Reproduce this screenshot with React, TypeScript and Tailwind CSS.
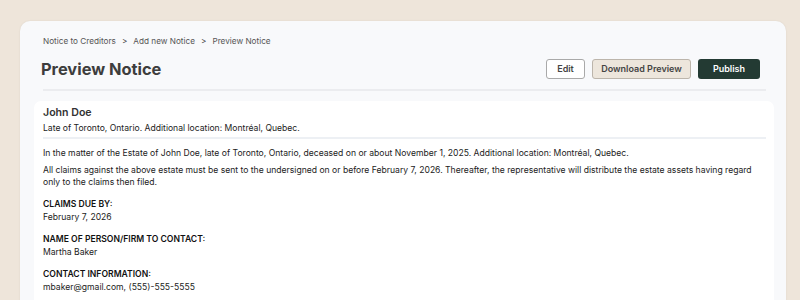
import React from "react";

const sans = { fontFamily: "Inter, 'Noto Sans', sans-serif" };

function Field({ label, value, first }: { label: string; value: string; first?: boolean }) {
  return (
    <div className={first ? "mt-[10px]" : "mt-[9px]"}>
      <div className="text-[8.6px] leading-[13px] font-semibold text-[#111]">{label}</div>
      <div className="text-[8.6px] leading-[13px] text-[#222]">{value}</div>
    </div>
  );
}

export default function App() {
  return (
    <div className="w-[800px] h-[300px] overflow-hidden bg-[#eee5da] pt-[21px] pl-[20px]" style={sans}>
      <div className="w-[766px] h-[300px] rounded-[10px] bg-[#f8f9fb] shadow-[0_0_2px_rgba(0,0,0,0.08)]">
        <div className="pl-[23px] pr-[20px] pt-[14px]">
          <div className="flex items-center gap-[6px] text-[8.2px] leading-[12px] text-[#555]">
            <span>Notice to Creditors</span>
            <span className="text-[#444]">&gt;</span>
            <span>Add new Notice</span>
            <span className="text-[#444]">&gt;</span>
            <span>Preview Notice</span>
          </div>
          <div className="mt-[12px] flex items-center justify-between">
            <h1 className="-ml-[2px] text-[16.4px] leading-[20px] font-bold text-[#3d3d3d]">Preview Notice</h1>
            <div className="mr-[6px] flex items-center gap-[7px] text-[9px] font-semibold">
              <button className="h-[20px] w-[39px] rounded-[3px] border border-[#a9a9a9] bg-white text-[#444]">Edit</button>
              <button className="h-[20px] w-[99px] rounded-[3px] border border-[#bcb5ab] bg-[#ede6dc] text-[#444]">Download Preview</button>
              <button className="h-[20px] w-[62px] rounded-[3px] bg-[#233a33] text-white">Publish</button>
            </div>
          </div>
          <div className="mt-[10px] h-[2px] bg-[#ebecef]" />
        </div>
        <div className="mt-[10px] ml-[14px] mr-[12px] h-[200px] rounded-t-[7px] bg-white pl-[9px] pr-[8px] pt-[4px]">
          <div className="border-b-2 border-[#edf0f4] pb-[3px]">
            <div className="text-[10.6px] leading-[16px] font-semibold text-[#333]">John Doe</div>
            <div className="mt-[1px] text-[8.6px] leading-[12px] text-[#222]">Late of Toronto, Ontario. Additional location: Montréal, Quebec.</div>
          </div>
          <p className="mt-[8px] text-[8.6px] leading-[12px] text-[#222]">
            In the matter of the Estate of John Doe, late of Toronto, Ontario, deceased on or about November 1, 2025. Additional location: Montréal, Quebec.
          </p>
          <p className="mt-[5px] w-[712px] text-[8.6px] leading-[12px] text-[#222]">
            All claims against the above estate must be sent to the undersigned on or before February 7, 2026. Thereafter, the representative will distribute the estate assets having regard only to the claims then filed.
          </p>
          <Field first label="CLAIMS DUE BY:" value="February 7, 2026" />
          <Field label="NAME OF PERSON/FIRM TO CONTACT:" value="Martha Baker" />
          <Field label="CONTACT INFORMATION:" value="mbaker@gmail.com, (555)-555-5555" />
        </div>
      </div>
    </div>
  );
}
